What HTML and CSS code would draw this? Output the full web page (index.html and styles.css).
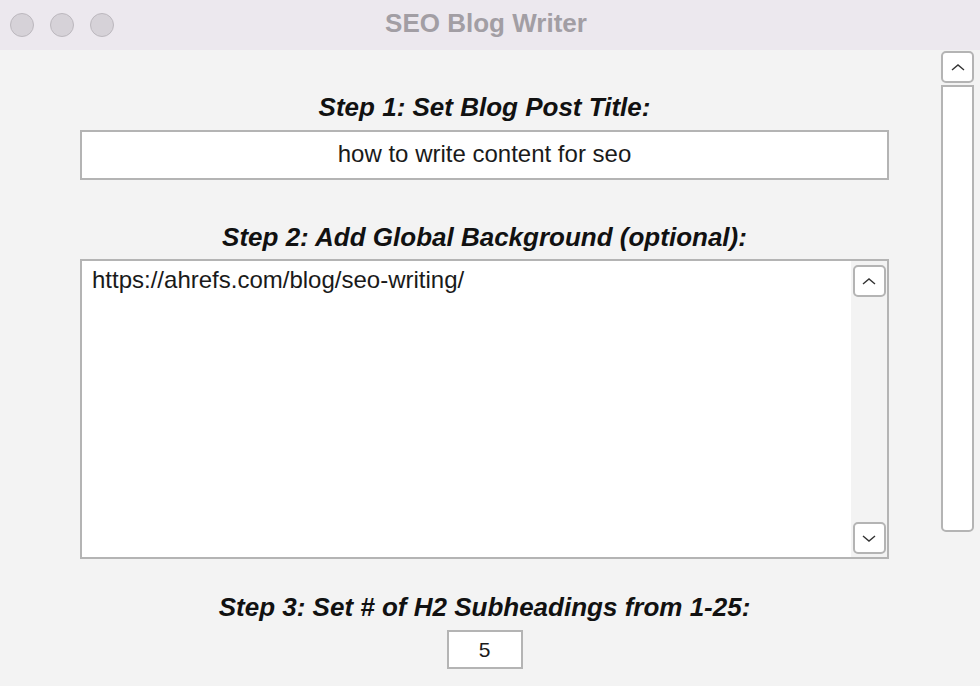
FILE: index.html
```html
<!DOCTYPE html>
<html>
<head>
  <title>SEO Blog Writer</title>
  <link rel="stylesheet" href="styles.css">
</head>
<body>
  <div class="window">
    <div class="titlebar">
      <div class="lights">
        <span class="light"></span>
        <span class="light"></span>
        <span class="light"></span>
      </div>
      <div class="title">SEO Blog Writer</div>
    </div>

    <div class="content">
      <div class="main">
        <h2 class="step step-one">Step 1: Set Blog Post Title:</h2>
        <div class="field title-field">how to write content for seo</div>

        <h2 class="step step-two">Step 2: Add Global Background (optional):</h2>
        <div class="field area">
          <div class="area-text">https://ahrefs.com/blog/seo-writing/</div>
          <div class="area-scroll">
            <div class="arrow-btn">
              <svg width="16" height="10" viewBox="0 0 16 10"><path d="M2 8 L8 3 L14 8" fill="none" stroke="#333" stroke-width="1.4"/></svg>
            </div>
            <div class="arrow-btn">
              <svg width="16" height="10" viewBox="0 0 16 10"><path d="M2 3 L8 8 L14 3" fill="none" stroke="#333" stroke-width="1.4"/></svg>
            </div>
          </div>
        </div>

        <h2 class="step step-three">Step 3: Set # of H2 Subheadings from 1-25:</h2>
        <div class="field count-field">5</div>
      </div>

      <div class="side">
        <div class="side-btn">
          <svg width="16" height="10" viewBox="0 0 16 10"><path d="M2 8 L8 3 L14 8" fill="none" stroke="#333" stroke-width="1.4"/></svg>
        </div>
        <div class="side-track"></div>
      </div>
    </div>
  </div>
</body>
</html>
```

FILE: styles.css
```css
/* window frame */
body {
  margin: 0;
  font-family: "Liberation Sans", Arial, sans-serif;
  background-color: #f3f3f3;
}
.window {
  width: 980px;
  height: 686px;
  overflow: hidden;
}
.titlebar {
  height: 50px;
  background-color: #ece8ee;
  display: flex;
  align-items: center;
  position: relative;
}
.lights {
  display: flex;
  gap: 16px;
  padding-left: 10px;
}
.light {
  width: 24px;
  height: 24px;
  border-radius: 50%;
  background-color: #d6d2d8;
  border: 1px solid #bcb8be;
  box-sizing: border-box;
}
.title {
  position: absolute;
  left: 0;
  right: 0;
  top: 8px;
  padding-right: 8px;
  text-align: center;
  font-weight: bold;
  font-size: 26px;
  line-height: 30px;
  color: #a29ea4;
}

/* content */
.content {
  display: flex;
  height: 636px;
}
.main {
  flex: 1;
  padding: 44px 51px 0 80px;
}
.step {
  margin: 0 0 10px;
  text-align: center;
  font-size: 26px;
  line-height: 26px;
  font-weight: bold;
  font-style: italic;
  color: #111;
}
.step-two {
  margin-top: 44px;
  margin-bottom: 9px;
}
.step-three {
  margin-top: 35px;
}
.field {
  background-color: #fff;
  border: 2px solid #b4b4b4;
  box-sizing: border-box;
  color: #1a1a1a;
  font-size: 24px;
}
.title-field {
  height: 50px;
  line-height: 44px;
  text-align: center;
}
.area {
  height: 300px;
  display: flex;
}
.area-text {
  flex: 1;
  padding: 5px 10px;
}
.area-scroll {
  width: 36px;
  background-color: #f3f3f3;
  display: flex;
  flex-direction: column;
  justify-content: space-between;
  align-items: center;
  padding: 4px 0 3px;
}
.arrow-btn {
  width: 33px;
  height: 32px;
  background-color: #fff;
  border: 2px solid #b4b4b4;
  border-radius: 5px;
  box-sizing: border-box;
  display: flex;
  align-items: center;
  justify-content: center;
}
.count-field {
  width: 76px;
  height: 39px;
  margin: 0 auto;
  line-height: 35px;
  text-align: center;
  font-size: 21px;
}

/* outer scrollbar */
.side {
  width: 40px;
  padding: 1px 0 0 1px;
  box-sizing: border-box;
}
.side-btn {
  width: 33px;
  height: 32px;
  background-color: #fff;
  border: 2px solid #b4b4b4;
  border-radius: 5px;
  box-sizing: border-box;
  display: flex;
  align-items: center;
  justify-content: center;
}
.side-track {
  width: 33px;
  height: 447px;
  margin-top: 2px;
  background-color: #fff;
  border: 2px solid #b4b4b4;
  border-radius: 0 0 5px 5px;
  box-sizing: border-box;
}
```
